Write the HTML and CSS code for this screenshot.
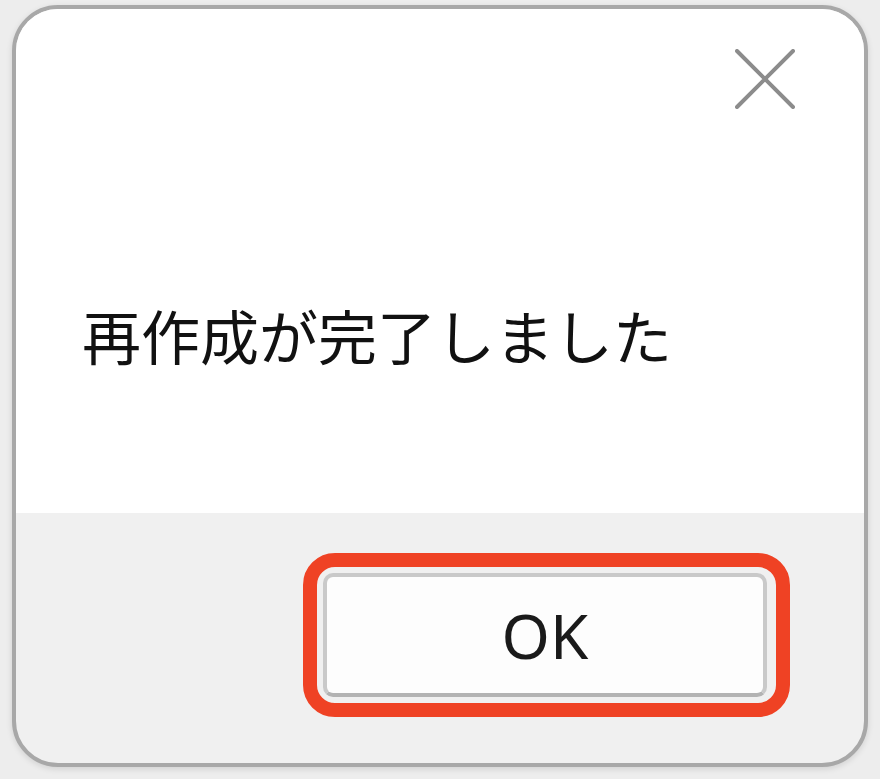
FILE: index.html
```html
<!DOCTYPE html>
<html lang="ja">
<head>
    <meta charset="UTF-8">
    <meta name="viewport" content="width=device-width, initial-scale=1.0">
    <title>完了</title>
    <link rel="stylesheet" href="styles.css">
</head>
<body>
    <div class="dialog">
        <div class="dialog-body">
            <div class="title-bar">
                <button type="button" class="close-button" aria-label="閉じる">
                    <svg width="60" height="60" viewBox="0 0 60 60">
                        <path d="M2 2 L58 58 M58 2 L2 58" stroke="#8c8c8c" stroke-width="4" stroke-linecap="round" fill="none"/>
                    </svg>
                </button>
            </div>
            <p class="message">再作成が完了しました</p>
        </div>
        <div class="dialog-footer">
            <div class="highlight">
                <button type="button" class="ok-button">OK</button>
            </div>
        </div>
    </div>
</body>
</html>
```

FILE: styles.css
```css
body {
    margin: 0;
    height: 779px;
    padding: 5px 12px 0 12px;
    box-sizing: border-box;
    background: #ededed;
    font-family: "Noto Sans CJK JP", "Noto Sans", sans-serif;
}

.dialog {
    width: 856px;
    height: 762px;
    box-sizing: border-box;
    border: 4px solid #a8a8a8;
    border-radius: 46px;
    background: #f0f0f0;
    overflow: hidden;
    display: flex;
    flex-direction: column;
    box-shadow: 0 2px 6px rgba(0, 0, 0, 0.12);
}

.dialog-body {
    height: 504px;
    background: #ffffff;
    display: flex;
    flex-direction: column;
}

.title-bar {
    display: flex;
    justify-content: flex-end;
    padding: 40px 69px 0 0;
}

.close-button {
    width: 60px;
    height: 60px;
    padding: 0;
    border: none;
    background: none;
    display: flex;
}

.message {
    margin: 196px 0 0 0;
    padding-left: 66px;
    font-size: 59px;
    line-height: 1;
    color: #111;
}

.dialog-footer {
    flex: 1;
    display: flex;
    justify-content: flex-end;
    align-items: flex-start;
    padding: 40px 74px 0 0;
}

.highlight {
    border: 14px solid #ef4224;
    border-radius: 32px;
    padding: 6px 9px 6px 6px;
    display: flex;
}

.ok-button {
    width: 444px;
    height: 124px;
    box-sizing: border-box;
    border: 4px solid #c9c9c9;
    border-bottom-color: #b3b3b3;
    border-radius: 10px;
    background: #fdfdfd;
    font-family: "Noto Sans", "Open Sans", sans-serif;
    font-size: 62px;
    color: #1a1a1a;
    padding: 0;
    line-height: 1;
}
```
